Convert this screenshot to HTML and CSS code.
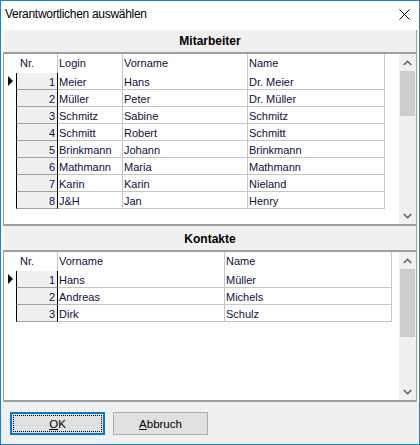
FILE: index.html
```html
<!DOCTYPE html>
<html lang="de">
<head>
<meta charset="utf-8">
<title>Verantwortlichen auswählen</title>
<link rel="stylesheet" href="styles.css">
</head>
<body>
<div class="window">
  <div class="titlebar">
    <span class="title">Verantwortlichen auswählen</span>
    <svg class="close" width="11" height="11" viewBox="0 0 11 11"><path d="M0.5 0.5 L10.5 10.5 M10.5 0.5 L0.5 10.5" stroke="#000" stroke-width="1" fill="none"/></svg>
  </div>
  <div class="panels">
    <section class="section">
      <div class="caption cap1">Mitarbeiter</div>
      <div class="gridbox gb1">
        <div class="table t1">
          <div class="row head">
            <div class="ind"></div><div class="nr">Nr.</div><div class="c login">Login</div><div class="c vorname">Vorname</div><div class="c name">Name</div>
          </div>
          <div class="row"><div class="ind"><span class="tri"></span></div><div class="nr">1</div><div class="c login">Meier</div><div class="c vorname">Hans</div><div class="c name">Dr. Meier</div></div>
          <div class="row"><div class="ind"></div><div class="nr">2</div><div class="c login">Müller</div><div class="c vorname">Peter</div><div class="c name">Dr. Müller</div></div>
          <div class="row"><div class="ind"></div><div class="nr">3</div><div class="c login">Schmitz</div><div class="c vorname">Sabine</div><div class="c name">Schmitz</div></div>
          <div class="row"><div class="ind"></div><div class="nr">4</div><div class="c login">Schmitt</div><div class="c vorname">Robert</div><div class="c name">Schmitt</div></div>
          <div class="row"><div class="ind"></div><div class="nr">5</div><div class="c login">Brinkmann</div><div class="c vorname">Johann</div><div class="c name">Brinkmann</div></div>
          <div class="row"><div class="ind"></div><div class="nr">6</div><div class="c login">Mathmann</div><div class="c vorname">Maria</div><div class="c name">Mathmann</div></div>
          <div class="row"><div class="ind"></div><div class="nr">7</div><div class="c login">Karin</div><div class="c vorname">Karin</div><div class="c name">Nieland</div></div>
          <div class="row"><div class="ind"></div><div class="nr">8</div><div class="c login">J&amp;H</div><div class="c vorname">Jan</div><div class="c name">Henry</div></div>
        </div>
        <div class="scrollbar">
          <div class="sbtn"><svg width="9" height="6" viewBox="0 0 9 6"><path d="M0.8 5 L4.5 1.3 L8.2 5" stroke="#606060" stroke-width="1.6" fill="none"/></svg></div>
          <div class="thumb th1"></div>
          <div class="track"></div>
          <div class="sbtn"><svg width="9" height="6" viewBox="0 0 9 6"><path d="M0.8 1 L4.5 4.7 L8.2 1" stroke="#606060" stroke-width="1.6" fill="none"/></svg></div>
        </div>
      </div>
    </section>
    <section class="section">
      <div class="caption cap2">Kontakte</div>
      <div class="gridbox gb2">
        <div class="table t2">
          <div class="row head">
            <div class="ind"></div><div class="nr">Nr.</div><div class="c kvor">Vorname</div><div class="c kname">Name</div>
          </div>
          <div class="row"><div class="ind"><span class="tri"></span></div><div class="nr">1</div><div class="c kvor">Hans</div><div class="c kname">Müller</div></div>
          <div class="row"><div class="ind"></div><div class="nr">2</div><div class="c kvor">Andreas</div><div class="c kname">Michels</div></div>
          <div class="row"><div class="ind"></div><div class="nr">3</div><div class="c kvor">Dirk</div><div class="c kname">Schulz</div></div>
        </div>
        <div class="scrollbar">
          <div class="sbtn"><svg width="9" height="6" viewBox="0 0 9 6"><path d="M0.8 5 L4.5 1.3 L8.2 5" stroke="#606060" stroke-width="1.6" fill="none"/></svg></div>
          <div class="thumb th2"></div>
          <div class="track"></div>
          <div class="sbtn"><svg width="9" height="6" viewBox="0 0 9 6"><path d="M0.8 1 L4.5 4.7 L8.2 1" stroke="#606060" stroke-width="1.6" fill="none"/></svg></div>
        </div>
      </div>
    </section>
  </div>
  <div class="buttons">
    <button class="btn default"><span class="focus"><u>O</u>K</span></button>
    <button class="btn"><span class="lbl"><u>A</u>bbruch</span></button>
  </div>
</div>
</body>
</html>
```

FILE: styles.css
```css
* { box-sizing: border-box; }
html, body { margin: 0; padding: 0; background: #fff; }
body { font-family: "Liberation Sans", Arial, sans-serif; }

.window {
  width: 420px;
  height: 445px;
  border: 1px solid #1883d7;
  display: flex;
  flex-direction: column;
  background: #fff;
}

.titlebar {
  height: 29px;
  display: flex;
  align-items: flex-start;
  flex: none;
}
.title {
  font-size: 12px;
  line-height: 16px;
  padding-top: 5px;
  padding-left: 4px;
  letter-spacing: -0.3px;
  color: #000;
}
.close { margin-left: auto; margin-right: 9px; margin-top: 8px; }

.panels {
  display: flex;
  flex-direction: column;
  padding: 0 2px 0 2px;
  background: #fff;
  flex: none;
}

.caption {
  background: #f0f0f0;
  font-weight: bold;
  font-size: 12px;
  text-align: center;
  color: #000;
  margin-left: 1px;
  border-right: 1px solid #a0a0a0;
}
.cap1 { height: 22px; line-height: 22px; }
.cap2 { height: 24px; line-height: 22px; padding-top: 2px; }

.gridbox {
  display: flex;
  background: #fff;
  border-left: 1px solid #a0a0a0;
  border-right: 1px solid #a0a0a0;
  border-top: 2px solid #a0a0a0;
}
.gb1 { height: 174px; border-bottom: 2px solid #a0a0a0; }
.gb2 { height: 152px; border-bottom: 2px solid #a0a0a0; }

.table {
  flex: 1;
  font-size: 11px;
  color: #101040;
}
.row { display: flex; height: 17px; }
.row.head { height: 19px; line-height: 19px; }
.row:not(.head) > div { border-bottom: 1px solid #c6c6c6; padding-top: 2px; line-height: 14px; }
.row:not(.head) > .ind { border-bottom: none; padding-top: 0; }

.ind { width: 12px; flex: none; position: relative; }
.tri {
  position: absolute;
  left: 4px;
  top: 3px;
  width: 0; height: 0;
  border-top: 5px solid transparent;
  border-bottom: 5px solid transparent;
  border-left: 5px solid #000;
}
.nr {
  width: 42px;
  flex: none;
  text-align: right;
  padding-right: 2px;
  border-right: 1px solid #c6c6c6;
}
.head .nr { text-align: left; padding-left: 3px; border-left: 1px solid transparent; }
.row:not(.head) > .nr {
  background: #f0f0f0;
  border-left: 1px solid #000;
  border-right: 1px solid #000;
  border-bottom: 1px solid #a0a0a0;
}
.c {
  flex: none;
  padding-left: 1px;
  border-right: 1px solid #c6c6c6;
  white-space: nowrap;
  overflow: hidden;
}
.login { width: 65px; }
.vorname { width: 125px; }
.name { width: 137px; }
.kvor { width: 167px; }
.kname { width: 167px; }

.scrollbar {
  width: 17px;
  flex: none;
  background: #f0f0f0;
  display: flex;
  flex-direction: column;
}
.sbtn {
  height: 17px;
  flex: none;
  display: flex;
  align-items: center;
  justify-content: center;
}
.thumb { background: #cdcdcd; margin: 0 1px; flex: none; }
.th1 { height: 45px; }
.th2 { height: 68px; }
.track { flex: 1; }

.buttons {
  flex: 1;
  background: #f0f0f0;
  display: flex;
  gap: 8px;
  padding: 10px 0 0 9px;
  align-items: flex-start;
}
.btn {
  width: 95px;
  height: 23px;
  background: #e1e1e1;
  border: 1px solid #adadad;
  font-family: "Liberation Sans", Arial, sans-serif;
  font-size: 11.5px;
  color: #000;
  padding: 0;
  display: flex;
  align-items: center;
  justify-content: center;
}
.btn.default { border: 2px solid #0078d7; padding: 1px; }
.focus {
  width: 100%;
  height: 100%;
  outline: 1px dotted #000;
  outline-offset: -1px;
  display: flex;
  align-items: center;
  justify-content: center;
}
.lbl { line-height: 14px; }
```
